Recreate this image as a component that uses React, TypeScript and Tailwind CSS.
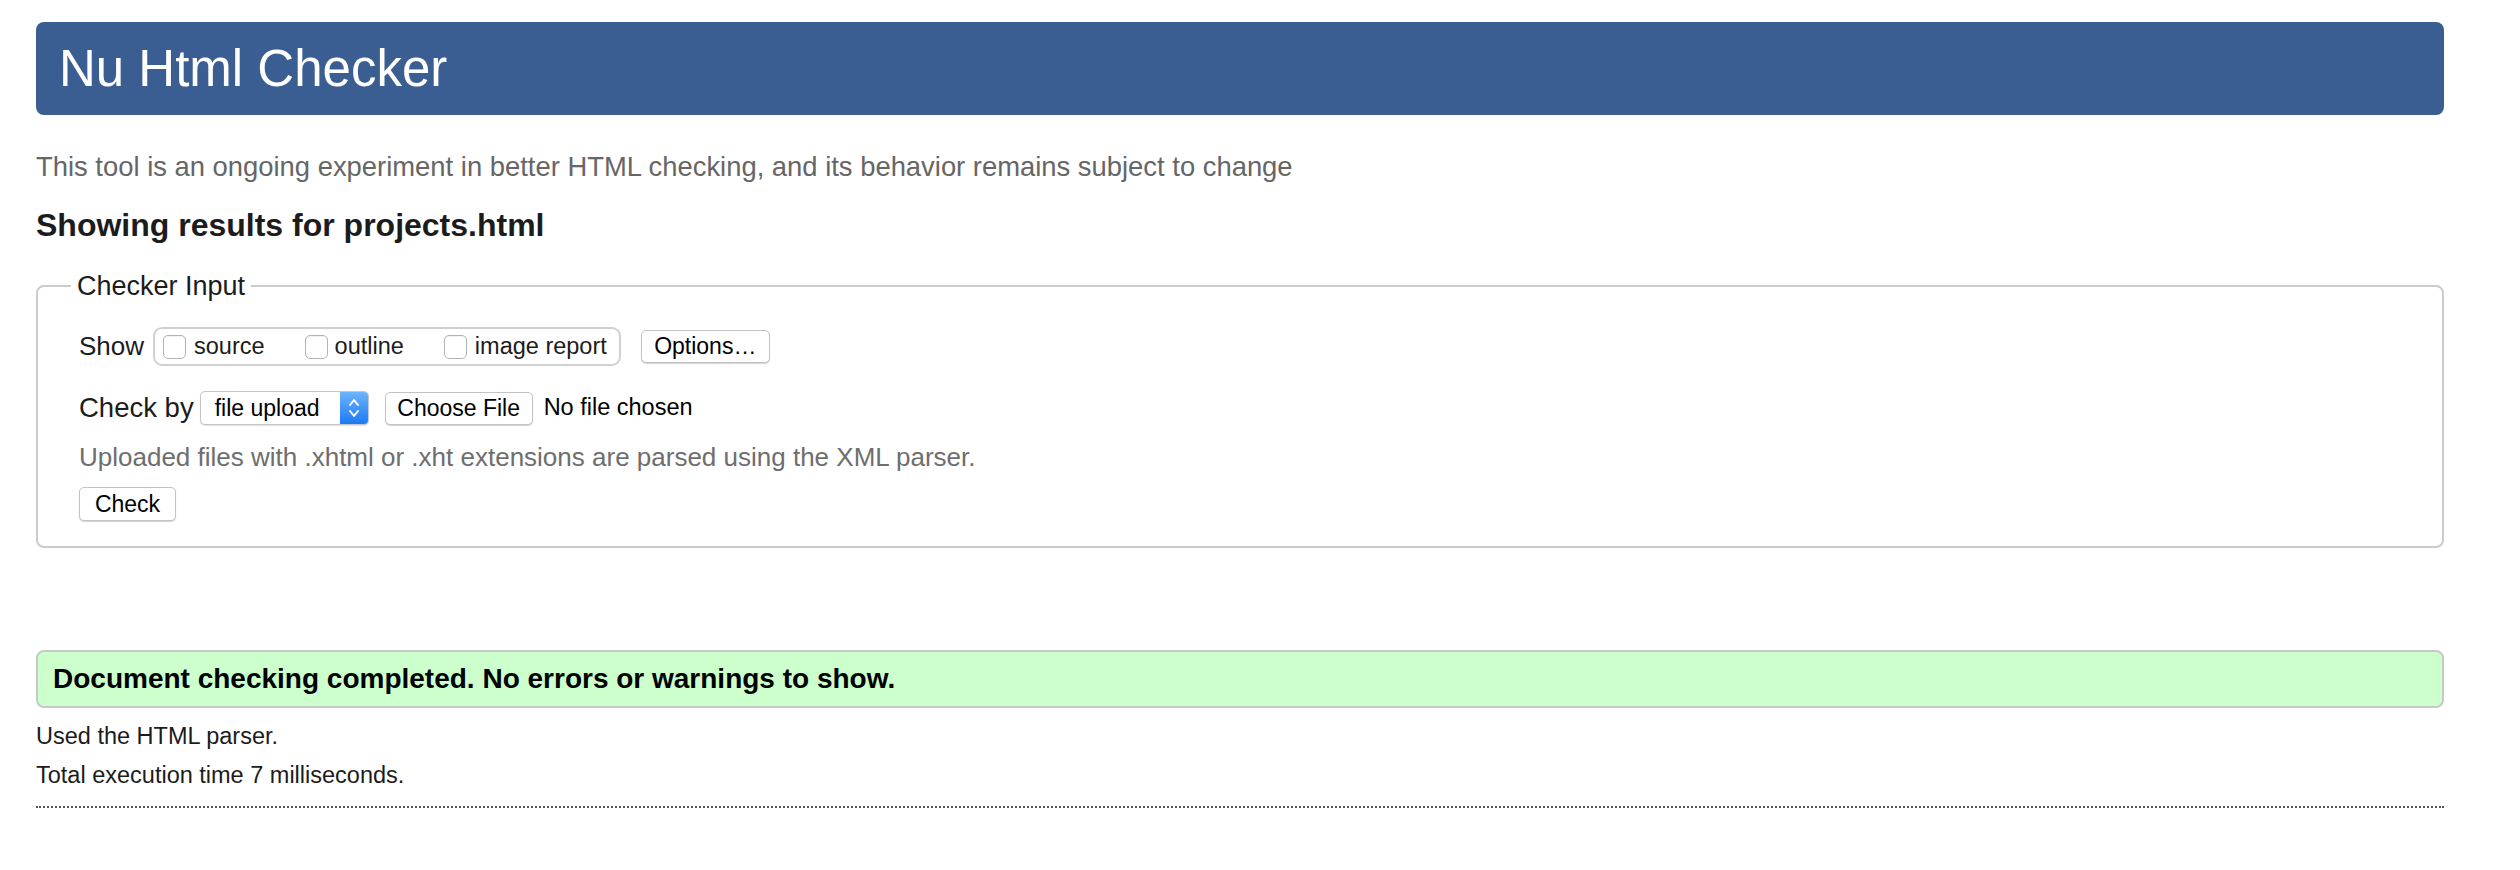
import React from "react";

function Checkbox() {
  return (
    <span className="inline-block w-[23px] h-[24px] shrink-0 rounded-[5px] border border-[#b3b3b3] bg-white shadow-[inset_0_1px_1px_rgba(0,0,0,0.06)]" />
  );
}

function Btn({ children, className }: { children: React.ReactNode; className?: string }) {
  return (
    <span
      className={
        "inline-flex items-center justify-center h-[33px] rounded-[5px] border border-[#c3c3c3] bg-white text-[23px] leading-none text-black shadow-[0_1px_1px_rgba(0,0,0,0.18)] " +
        (className ?? "")
      }
    >
      {children}
    </span>
  );
}

export default function App() {
  return (
    <div
      className="min-h-[870px] bg-white text-[#222]"
      style={{ fontFamily: '"Liberation Sans", Arial, sans-serif' }}
    >
      <div className="ml-[36px] w-[2408px] pt-[22px] flex flex-col">
        <header className="h-[93px] rounded-[8px] bg-[#3a5e92] flex items-center pl-[23px]">
          <h1 className="text-[51px] leading-none text-white font-normal">Nu Html Checker</h1>
        </header>

        <p className="mt-[36px] text-[27.4px] leading-[32px] text-[#666]">
          This tool is an ongoing experiment in better HTML checking, and its behavior remains subject to change
        </p>

        <h2 className="mt-[24px] text-[32px] leading-[36px] font-bold text-[#1c1c1c]">
          Showing results for projects.html
        </h2>

        <fieldset className="mt-[27px] border-2 border-[#cbcbcb] rounded-[8px] pl-[33px] pr-[20px] pt-[25px] pb-[25px]">
          <legend className="px-[6px] text-[27px] leading-[32px] text-[#1c1c1c]">Checker Input</legend>

          <div className="pl-[8px] flex flex-col">
            <div className="flex items-center h-[39px]">
              <span className="text-[26px] text-[#1c1c1c]">Show</span>
              <div className="ml-[9px] h-[39px] flex items-center rounded-[9px] border-2 border-[#d0d0d0] pl-[8px] pr-[12px] text-[23.5px] text-[#1c1c1c]">
                <Checkbox />
                <span className="ml-[8px]">source</span>
                <span className="ml-[40px] flex items-center">
                  <Checkbox />
                </span>
                <span className="ml-[7px]">outline</span>
                <span className="ml-[40px] flex items-center">
                  <Checkbox />
                </span>
                <span className="ml-[8px]">image report</span>
              </div>
              <Btn className="ml-[20px] w-[129px]">Options…</Btn>
            </div>

            <div className="mt-[25px] flex items-center h-[34px]">
              <span className="text-[27.5px] text-[#1c1c1c]">Check by</span>
              <div className="ml-[6px] w-[169px] h-[34px] flex rounded-[5px] border border-[#c6c6c6] bg-white shadow-[0_1px_1px_rgba(0,0,0,0.12)] overflow-hidden">
                <span className="flex-1 flex items-center pl-[14px] text-[23px] text-black">file upload</span>
                <span className="w-[28px] h-full flex items-center justify-center bg-[linear-gradient(#6fb4fb,#1a7af5)]">
                  <svg width="12" height="22" viewBox="0 0 12 22" fill="none" stroke="white" strokeWidth="2" strokeLinecap="round" strokeLinejoin="round">
                    <path d="M2 8 L6 3 L10 8" />
                    <path d="M2 14 L6 19 L10 14" />
                  </svg>
                </span>
              </div>
              <Btn className="ml-[16px] w-[148px]">Choose File</Btn>
              <span className="ml-[11px] text-[23.5px] text-black">No file chosen</span>
            </div>

            <p className="mt-[17px] text-[26px] leading-[30px] text-[#6e6e6e]">
              Uploaded files with .xhtml or .xht extensions are parsed using the XML parser.
            </p>

            <div className="mt-[15px] flex">
              <Btn className="w-[97px] h-[34px]">Check</Btn>
            </div>
          </div>
        </fieldset>

        <div className="mt-[102px] h-[58px] rounded-[8px] border-2 border-[#c8c8c8] bg-[#ccffcc] flex items-center pl-[15px]">
          <p className="text-[28px] font-bold text-black leading-none">
            Document checking completed. No errors or warnings to show.
          </p>
        </div>

        <p className="mt-[14px] text-[23.5px] leading-[28px] text-[#1c1c1c]">Used the HTML parser.</p>
        <p className="mt-[11px] text-[23.5px] leading-[28px] text-[#1c1c1c]">Total execution time 7 milliseconds.</p>

        <div className="mt-[17px] border-t-2 border-dotted border-[#555]" />
      </div>
    </div>
  );
}
